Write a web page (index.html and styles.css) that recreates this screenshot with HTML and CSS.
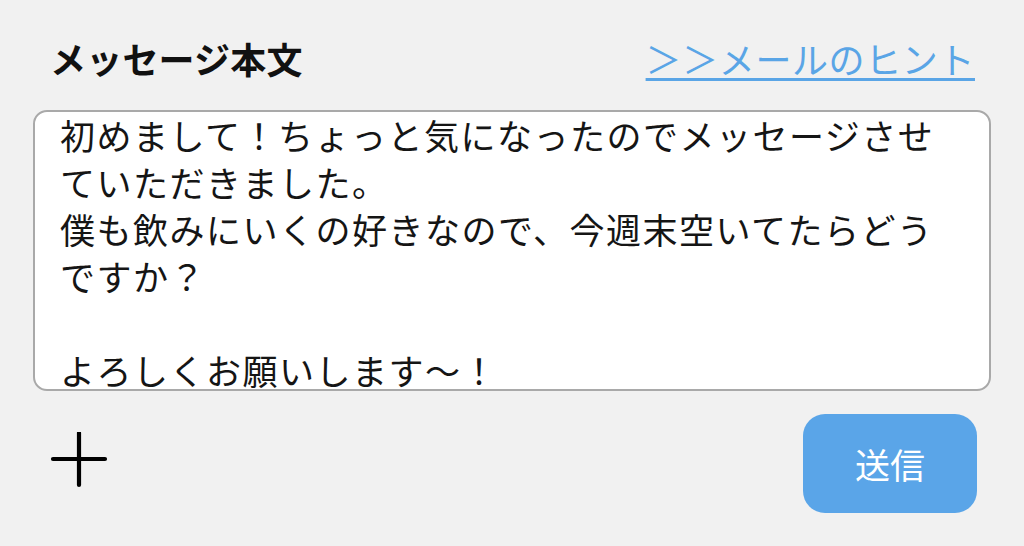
FILE: index.html
```html
<!DOCTYPE html>
<html lang="ja">
<head>
<meta charset="utf-8">
<link rel="stylesheet" href="styles.css">
</head>
<body>
<div class="page">
  <div class="header">
    <div class="title">メッセージ本文</div>
    <a class="hint" href="#">＞＞メールのヒント</a>
  </div>
  <div class="box">
    <div class="msg">初めまして！ちょっと気になったのでメッセージさせ<br>ていただきました。<br>僕も飲みにいくの好きなので、今週末空いてたらどう<br>ですか？<br><br>よろしくお願いします〜！</div>
  </div>
  <div class="footer">
    <svg class="plus" width="58" height="58" viewBox="0 0 58 58">
      <path d="M3 27H55M29 1V53" stroke="#000" stroke-width="4.2" stroke-linecap="round" fill="none"/>
    </svg>
    <button class="send">送信</button>
  </div>
</div>
</body>
</html>
```
FILE: styles.css
```css
html, body {
  margin: 0;
  padding: 0;
  background: #f1f1f1;
}
.page {
  width: 1024px;
  height: 546px;
  overflow: hidden;
  font-family: "Noto Sans CJK JP", "Noto Sans", sans-serif;
  color: #111;
}
.header {
  display: flex;
  justify-content: space-between;
  align-items: center;
  padding: 39px 49px 0 50px;
  height: 38px;
}
.title {
  font-size: 36px;
  font-weight: 700;
  line-height: 38px;
  letter-spacing: 0.2px;
}
.hint {
  font-size: 36px;
  line-height: 38px;
  color: #5aa5e6;
  text-decoration: underline;
  text-decoration-thickness: 3px;
  text-underline-offset: 4px;
  letter-spacing: 0.6px;
}
.box {
  margin: 33px 33px 0 33px;
  height: 277px;
  border: 2px solid #a9a9a9;
  border-radius: 14px;
  background: #fff;
  overflow: hidden;
}
.msg {
  padding: 0 0 0 25px;
  margin-top: -1px;
  font-size: 35px;
  line-height: 47px;
  letter-spacing: 1.5px;
  color: #151515;
}
.footer {
  display: flex;
  justify-content: space-between;
  align-items: center;
  padding: 23px 47px 0 50px;
}
.plus {
  display: block;
  margin-top: -6px;
}
.send {
  width: 174px;
  height: 99px;
  border: none;
  border-radius: 22px;
  background: #5aa5e8;
  color: #fff;
  font-family: "Noto Sans CJK JP", sans-serif;
  font-size: 35px;
  font-weight: 400;
  padding: 0;
}
```
